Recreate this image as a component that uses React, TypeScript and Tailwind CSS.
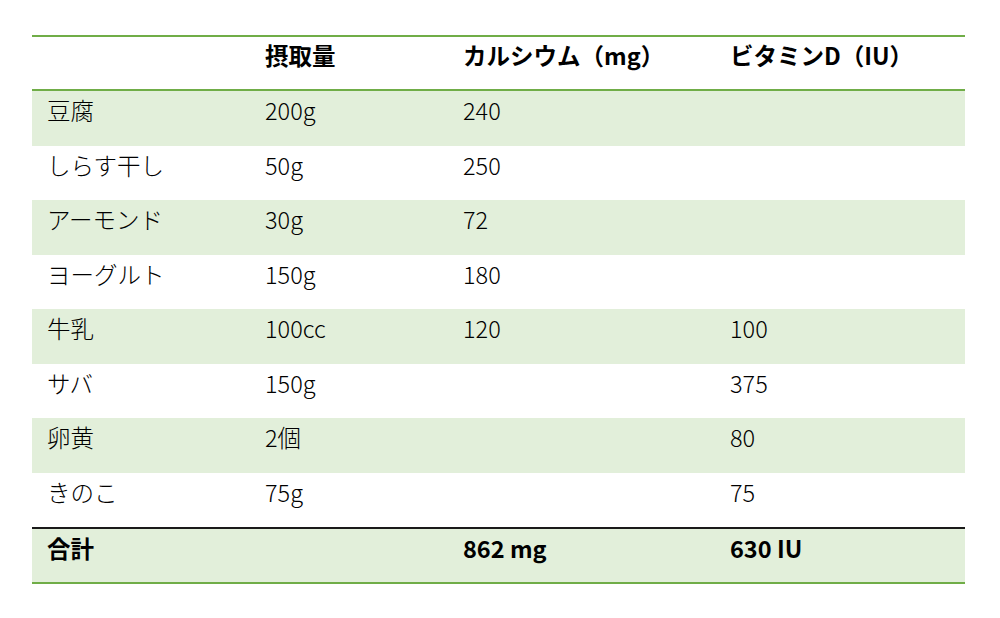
import React from 'react'

const rows: [string, string, string, string][] = [
    ['豆腐', '200g', '240', ''],
    ['しらす干し', '50g', '250', ''],
    ['アーモンド', '30g', '72', ''],
    ['ヨーグルト', '150g', '180', ''],
    ['牛乳', '100cc', '120', '100'],
    ['サバ', '150g', '', '375'],
    ['卵黄', '2個', '', '80'],
    ['きのこ', '75g', '', '75'],
]

const grid = 'grid grid-cols-[218px_198px_267px_250px]'

const App = () => {
    return (
        <div
            className="w-[1000px] h-[618px] bg-white text-black pt-[35px] pl-[32px]"
            style={{ fontFamily: '"Noto Sans CJK JP", "Noto Sans", sans-serif' }}
        >
            <div className="w-[933px] border-t-2 border-b-2 border-[#70ad47]">
                <div className={`${grid} h-[54px] border-b-2 border-[#70ad47] font-bold text-[23.5px] leading-[28px]`}>
                    <div className="pl-[15px] pt-[4px]"></div>
                    <div className="pl-[15px] pt-[4px]">摂取量</div>
                    <div className="pl-[15px] pt-[4px]">カルシウム（mg）</div>
                    <div className="pl-[15px] pt-[4px]">ビタミンD（IU）</div>
                </div>
                {rows.map((r, i) => (
                    <div
                        key={i}
                        className={`${grid} h-[54.5px] text-[23.5px] leading-[28px] font-light ${i % 2 === 0 ? 'bg-[#e2efda]' : 'bg-white'}`}
                    >
                        {r.map((c, j) => (
                            <div key={j} className="pl-[15px] pt-[5px]">{c}</div>
                        ))}
                    </div>
                ))}
                <div className={`${grid} h-[55px] border-t-2 border-[#1a1a1a] bg-[#e2efda] font-bold text-[23.5px] leading-[28px]`}>
                    <div className="pl-[15px] pt-[5px]">合計</div>
                    <div className="pl-[15px] pt-[5px]"></div>
                    <div className="pl-[15px] pt-[5px]">862 mg</div>
                    <div className="pl-[15px] pt-[5px]">630 IU</div>
                </div>
            </div>
        </div>
    )
}

export default App
